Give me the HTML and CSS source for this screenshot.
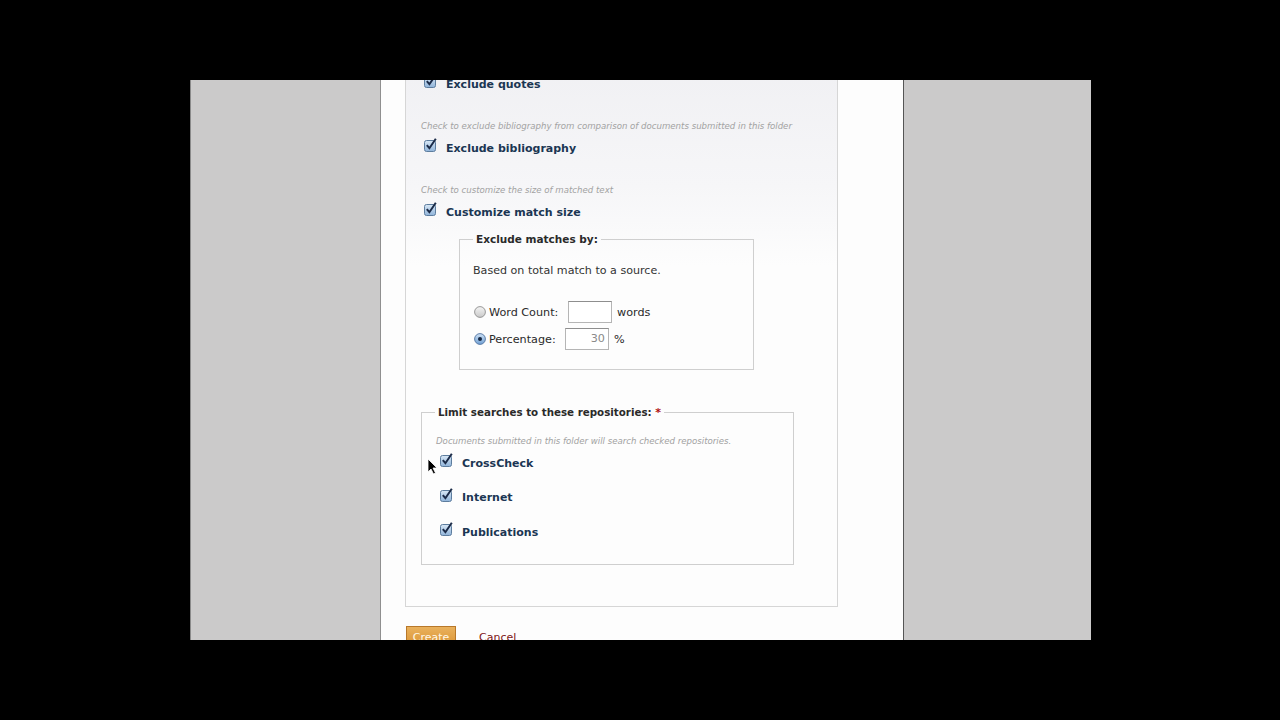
FILE: index.html
```html
<!DOCTYPE html>
<html>
<head>
<meta charset="utf-8">
<link rel="stylesheet" href="styles.css">
</head>
<body>
<div class="screen">
  <div class="page">
    <div class="panel">
      <div class="option">
        <div class="hint">Check to exclude quoted material from comparison of documents submitted in this folder</div>
        <div class="check-row">
          <svg class="cb" viewBox="0 0 14 14"><defs><linearGradient id="g1" x1="0" y1="0" x2="0" y2="1"><stop offset="0" stop-color="#d9e8f6"/><stop offset="1" stop-color="#8fb3d9"/></linearGradient></defs><rect x="0.5" y="2.5" width="11" height="11" rx="2" fill="url(#g1)" stroke="#5d7d9e"/><path d="M2.8 7.2 L5.4 10.2 L11.8 0.8" fill="none" stroke="#1b2b48" stroke-width="2"/></svg>
          <span class="label">Exclude quotes</span>
        </div>
      </div>
      <div class="option">
        <div class="hint">Check to exclude bibliography from comparison of documents submitted in this folder</div>
        <div class="check-row">
          <svg class="cb" viewBox="0 0 14 14"><rect x="0.5" y="2.5" width="11" height="11" rx="2" fill="url(#g1)" stroke="#5d7d9e"/><path d="M2.8 7.2 L5.4 10.2 L11.8 0.8" fill="none" stroke="#1b2b48" stroke-width="2"/></svg>
          <span class="label">Exclude bibliography</span>
        </div>
      </div>
      <div class="option">
        <div class="hint">Check to customize the size of matched text</div>
        <div class="check-row">
          <svg class="cb" viewBox="0 0 14 14"><rect x="0.5" y="2.5" width="11" height="11" rx="2" fill="url(#g1)" stroke="#5d7d9e"/><path d="M2.8 7.2 L5.4 10.2 L11.8 0.8" fill="none" stroke="#1b2b48" stroke-width="2"/></svg>
          <span class="label">Customize match size</span>
        </div>
      </div>

      <fieldset class="matches">
        <legend>Exclude matches by:</legend>
        <p class="note">Based on total match to a source.</p>
        <div class="radio-row">
          <svg class="radio" viewBox="0 0 12 12"><defs><linearGradient id="rg" x1="0" y1="0" x2="0" y2="1"><stop offset="0" stop-color="#f4f4f4"/><stop offset="1" stop-color="#c9c9c9"/></linearGradient></defs><circle cx="6" cy="6" r="5.4" fill="url(#rg)" stroke="#8d8d8d" stroke-width="0.9"/></svg>
          <span class="rlabel wc">Word Count:</span>
          <span class="field"></span>
          <span class="unit">words</span>
        </div>
        <div class="radio-row">
          <svg class="radio" viewBox="0 0 12 12"><defs><linearGradient id="rb" x1="0" y1="0" x2="0" y2="1"><stop offset="0" stop-color="#cfe2f6"/><stop offset="1" stop-color="#6f9fd3"/></linearGradient></defs><circle cx="6" cy="6" r="5.4" fill="url(#rb)" stroke="#4f73a0" stroke-width="0.9"/><circle cx="6" cy="6" r="2" fill="#162640"/></svg>
          <span class="rlabel pc">Percentage:</span>
          <span class="field num">30</span>
          <span class="unit">%</span>
        </div>
      </fieldset>

      <fieldset class="repos">
        <legend>Limit searches to these repositories: <span class="req">*</span></legend>
        <div class="hint">Documents submitted in this folder will search checked repositories.</div>
        <div class="repo-row">
          <svg class="cb" viewBox="0 0 14 14"><rect x="0.5" y="2.5" width="11" height="11" rx="2" fill="url(#g1)" stroke="#5d7d9e"/><path d="M2.8 7.2 L5.4 10.2 L11.8 0.8" fill="none" stroke="#1b2b48" stroke-width="2"/></svg>
          <span class="label">CrossCheck</span>
        </div>
        <div class="repo-row">
          <svg class="cb" viewBox="0 0 14 14"><rect x="0.5" y="2.5" width="11" height="11" rx="2" fill="url(#g1)" stroke="#5d7d9e"/><path d="M2.8 7.2 L5.4 10.2 L11.8 0.8" fill="none" stroke="#1b2b48" stroke-width="2"/></svg>
          <span class="label">Internet</span>
        </div>
        <div class="repo-row">
          <svg class="cb" viewBox="0 0 14 14"><rect x="0.5" y="2.5" width="11" height="11" rx="2" fill="url(#g1)" stroke="#5d7d9e"/><path d="M2.8 7.2 L5.4 10.2 L11.8 0.8" fill="none" stroke="#1b2b48" stroke-width="2"/></svg>
          <span class="label">Publications</span>
        </div>
        <svg class="cursor" viewBox="0 0 11 17"><path d="M1 1 L1 14 L4 11 L6.5 16 L8.5 15 L6 10 L10 10 Z" fill="#000" stroke="#fff" stroke-width="0.8"/></svg>
      </fieldset>
    </div>
    <div class="actions">
      <span class="btn">Create</span>
      <span class="cancel">Cancel</span>
    </div>
  </div>
</div>
</body>
</html>
```

FILE: styles.css
```css
html, body {
  margin: 0;
  padding: 0;
  background: #000;
  width: 1280px;
  height: 720px;
  overflow: hidden;
}

.screen {
  margin: 80px 0 0 190px;
  width: 900px;
  height: 560px;
  background: #cbcaca;
  border-left: 1px solid #8a8a8a;
  overflow: hidden;
  font-family: "DejaVu Sans", Verdana, sans-serif;
}

.page {
  margin-left: 189px;
  width: 522px;
  height: 560px;
  background: #fdfdfd;
  border-left: 1px solid #8f8f8f;
  border-right: 1px solid #555;
  overflow: hidden;
}

.panel {
  margin: -45px 0 0 24px;
  width: 431px;
  border: 1px solid #d6d6d6;
  background: linear-gradient(#efeff2 0, #f6f6f8 150px, #fdfdfd 230px);
  padding: 20px 0 41px 0;
}

.option {
  padding-left: 15px;
  margin-bottom: 26px;
}

.hint {
  font-size: 8.6px;
  font-style: italic;
  color: #a2a2a2;
  line-height: 12px;
  height: 12px;
  white-space: nowrap;
}

.check-row {
  margin-top: 6px;
  height: 20px;
  display: flex;
  align-items: center;
  padding-left: 3px;
}

.cb {
  width: 14px;
  height: 14px;
  flex: none;
  margin-top: -6px;
}

.label {
  font-size: 11px;
  font-weight: bold;
  color: #1b3653;
  margin-left: 8px;
  white-space: nowrap;
}

fieldset {
  border: 1px solid #cfcfcf;
  margin: 0;
  box-sizing: border-box;
}

legend {
  padding: 0 3px;
  line-height: 14px;
  font-size: 10.5px;
  font-weight: bold;
  color: #2a2a2a;
  white-space: nowrap;
}

.matches {
  margin: -16px 0 0 53px;
  width: 295px;
  padding: 0 13px 19px 13px;
}

.note {
  margin: 18px 0 0 0;
  font-size: 11.1px;
  line-height: 14px;
  color: #333;
  white-space: nowrap;
}

.radio-row {
  display: flex;
  align-items: center;
  height: 22px;
  font-size: 11.2px;
  color: #2a2a2a;
  margin-top: 5px;
  white-space: nowrap;
}

.matches .note + .radio-row {
  margin-top: 23px;
}

.radio {
  width: 12px;
  height: 12px;
  flex: none;
  margin-left: 1px;
}

.rlabel {
  margin-left: 3px;
}

.wc { width: 79px; }
.pc { width: 76px; }

.field {
  box-sizing: border-box;
  width: 44px;
  height: 22px;
  border: 1px solid #b5b5b5;
  border-top-color: #8e8e8e;
  background: #fff;
  text-align: right;
  padding-right: 3px;
  line-height: 20px;
  color: #8a8a8a;
}

.unit {
  margin-left: 5px;
}

.repos {
  position: relative;
  margin: 35px 0 0 15px;
  width: 373px;
  padding: 0 13px 22px 13px;
}

.repos legend {
  font-size: 10.3px;
}

.req {
  color: #b01010;
  font-size: 11px;
}

.repos .hint {
  margin-top: 15px;
  padding-left: 1px;
}

.repo-row {
  display: flex;
  align-items: center;
  height: 20px;
  padding-left: 5px;
  margin-top: 14.5px;
}

.repos .hint + .repo-row {
  margin-top: 6px;
}

.cursor {
  position: absolute;
  left: 5px;
  top: 38px;
  width: 11px;
  height: 17px;
}

.actions {
  display: flex;
  align-items: flex-start;
  margin: 19px 0 0 25px;
}

.btn {
  box-sizing: border-box;
  width: 50px;
  height: 24px;
  background: linear-gradient(#e9b15c, #d98f2e);
  border: 1px solid #b8782a;
  color: #fff7e6;
  font-size: 11px;
  text-align: center;
  line-height: 22px;
}

.cancel {
  margin-left: 23px;
  margin-top: 5px;
  font-size: 11px;
  color: #7d1515;
}
```
